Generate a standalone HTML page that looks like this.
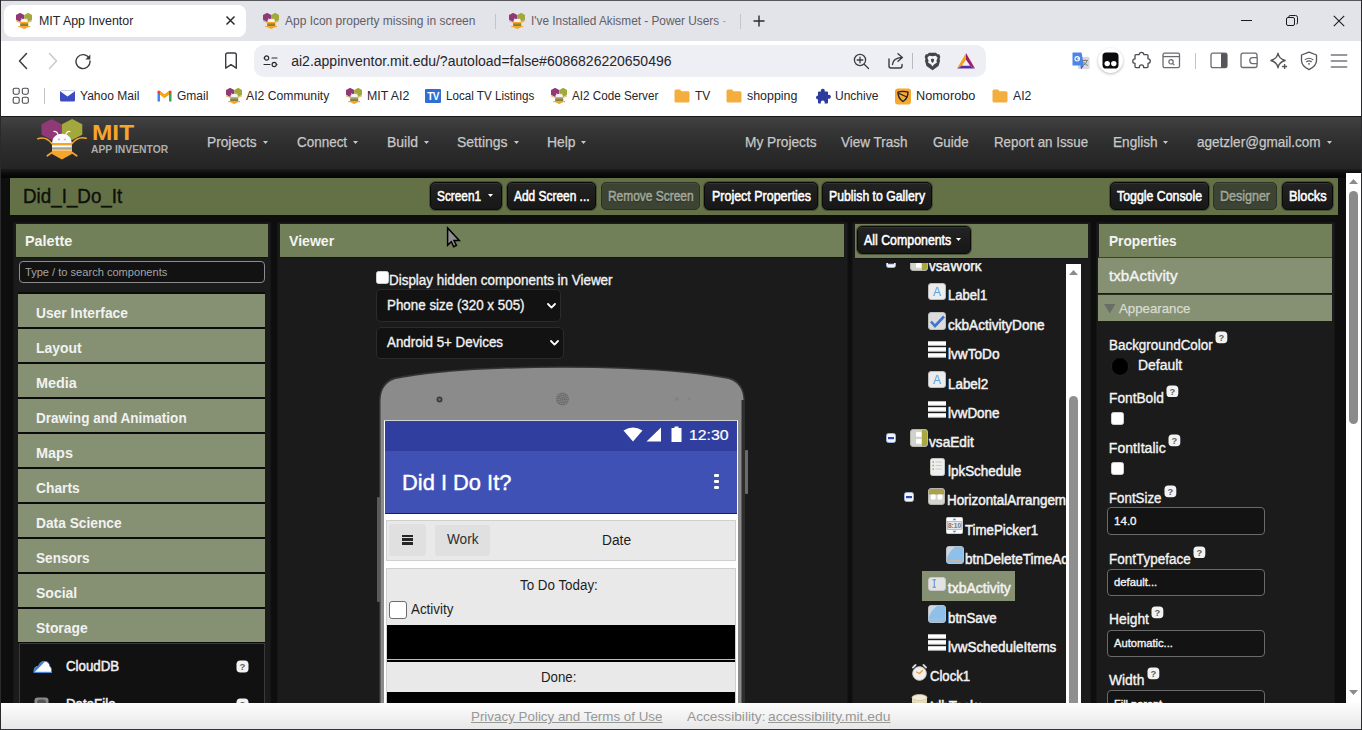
<!DOCTYPE html>
<html lang="en"><head><meta charset="utf-8"><title>MIT App Inventor</title>
<style>
html,body{margin:0;padding:0;}
body{width:1362px;height:730px;overflow:hidden;position:relative;background:#111;font-family:"Liberation Sans", sans-serif;}
div,svg,span.t{position:absolute;}
div{box-sizing:border-box;}
span.t{white-space:nowrap;}

</style></head><body>
<div style="left:0px;top:116px;width:1362px;height:614px;background:#0e0e0e;"></div>
<div style="left:0px;top:116px;width:1362px;height:53px;background:linear-gradient(#424242 0%, #363636 25%, #2d2d2d 55%, #242424 100%);border-top:1px solid #1a1a1a;"></div>
<div style="left:0px;top:169px;width:1362px;height:9px;background:linear-gradient(#1d1d1d, #0d0d0d 45%, #030303);"></div>
<svg style="left:36.5px;top:117.5px" width="50" height="42.0" viewBox="0 0 50 42"><polygon points="14.70,0.90 24.90,6.20 24.90,16.80 14.70,22.10 4.50,16.80 4.50,6.20" fill="#8f3a77"/><polygon points="35.10,0.90 45.30,6.20 45.30,16.80 35.10,22.10 24.90,16.80 24.90,6.20" fill="#a2a83b"/><path d="M0.800 20.800 Q9 17.800 15 25.800 M49.200 20.300 Q41 17.800 34.800 25.800" stroke="#f5a52a" stroke-width="1.500" fill="none" stroke-linecap="round"/><path d="M16 33.800 L10.300 37.800 M33.800 33.800 L39.700 37.800" stroke="#f5a52a" stroke-width="1.700" stroke-linecap="round" fill="none"/><polygon points="15,32 34.800,32 34.800,36 24.900,41.400 15,36" fill="#f5a52a"/><path d="M15 26 C15 19.500 19 15.800 24.900 15.800 C30.800 15.800 34.800 19.500 34.800 26 L34.800 33 L15 33 Z" fill="#fafafa"/><rect x="15" y="25" width="19.800" height="2.300" fill="#f5a52a"/><rect x="15" y="29.300" width="19.800" height="2.400" fill="#a3a394"/><rect x="15" y="32.400" width="19.800" height="1.900" fill="#f5a52a"/><path d="M21 17 C20.500 14.500 19 13.300 16.800 13.500 M28.800 17 C29.300 14.500 30.800 13.300 33 13.500" stroke="#fafafa" stroke-width="1.200" fill="none" stroke-linecap="round"/><path d="M21 20.800 L23 22.200 M23 20.800 L21 22.200 M26.800 20.800 L28.800 22.200 M28.800 20.800 L26.800 22.200" stroke="#9a9a9a" stroke-width="0.600"/></svg>
<span class="t" style="top:119.00px;font-size:22.3px;line-height:28px;color:#f5a52a;font-weight:700;left:91.57px;transform-origin:0 50%;transform:scaleX(1.0954);">MIT</span>
<span class="t" style="top:143.00px;font-size:10.5px;line-height:13px;color:#adadad;font-weight:700;left:91.42px;transform-origin:0 50%;transform:scaleX(0.9842);">APP INVENTOR</span>
<span class="t" style="top:133.00px;font-size:14.5px;line-height:18px;color:#c8c8c8;left:207.2px;transform-origin:0 50%;transform:scaleX(0.9466);-webkit-text-stroke:0.25px currentColor;">Projects</span>
<svg style="left:263px;top:141px;" width="5" height="3" viewBox="0 0 5 3"><polygon points="0,0 5,0 2.5,3" fill="#c8c8c8"/></svg>
<span class="t" style="top:133.00px;font-size:14.5px;line-height:18px;color:#c8c8c8;left:296.7px;transform-origin:0 50%;transform:scaleX(0.9274);-webkit-text-stroke:0.25px currentColor;">Connect</span>
<svg style="left:353px;top:141px;" width="5" height="3" viewBox="0 0 5 3"><polygon points="0,0 5,0 2.5,3" fill="#c8c8c8"/></svg>
<span class="t" style="top:133.00px;font-size:14.5px;line-height:18px;color:#c8c8c8;left:386.7px;transform-origin:0 50%;transform:scaleX(0.9642);-webkit-text-stroke:0.25px currentColor;">Build</span>
<svg style="left:424px;top:141px;" width="5" height="3" viewBox="0 0 5 3"><polygon points="0,0 5,0 2.5,3" fill="#c8c8c8"/></svg>
<span class="t" style="top:133.00px;font-size:14.5px;line-height:18px;color:#c8c8c8;left:457.2px;transform-origin:0 50%;transform:scaleX(0.9654);-webkit-text-stroke:0.25px currentColor;">Settings</span>
<svg style="left:514px;top:141px;" width="5" height="3" viewBox="0 0 5 3"><polygon points="0,0 5,0 2.5,3" fill="#c8c8c8"/></svg>
<span class="t" style="top:133.00px;font-size:14.5px;line-height:18px;color:#c8c8c8;left:546.7px;transform-origin:0 50%;transform:scaleX(0.9587);-webkit-text-stroke:0.25px currentColor;">Help</span>
<svg style="left:581px;top:141px;" width="5" height="3" viewBox="0 0 5 3"><polygon points="0,0 5,0 2.5,3" fill="#c8c8c8"/></svg>
<span class="t" style="top:133.00px;font-size:14.5px;line-height:18px;color:#c8c8c8;left:744.7px;transform-origin:0 50%;transform:scaleX(0.9451);-webkit-text-stroke:0.25px currentColor;">My Projects</span>
<span class="t" style="top:133.00px;font-size:14.5px;line-height:18px;color:#c8c8c8;left:841.2px;transform-origin:0 50%;transform:scaleX(0.9318);-webkit-text-stroke:0.25px currentColor;">View Trash</span>
<span class="t" style="top:133.00px;font-size:14.5px;line-height:18px;color:#c8c8c8;left:933.2px;transform-origin:0 50%;transform:scaleX(0.9197);-webkit-text-stroke:0.25px currentColor;">Guide</span>
<span class="t" style="top:133.00px;font-size:14.5px;line-height:18px;color:#c8c8c8;left:994.2px;transform-origin:0 50%;transform:scaleX(0.9191);-webkit-text-stroke:0.25px currentColor;">Report an Issue</span>
<span class="t" style="top:133.00px;font-size:14.5px;line-height:18px;color:#c8c8c8;left:1112.9px;transform-origin:0 50%;transform:scaleX(0.9376);-webkit-text-stroke:0.25px currentColor;">English</span>
<svg style="left:1163px;top:141px;" width="5" height="3" viewBox="0 0 5 3"><polygon points="0,0 5,0 2.5,3" fill="#c8c8c8"/></svg>
<span class="t" style="top:133.00px;font-size:14.5px;line-height:18px;color:#c8c8c8;left:1196.9px;transform-origin:0 50%;transform:scaleX(0.9336);-webkit-text-stroke:0.25px currentColor;">agetzler@gmail.com</span>
<svg style="left:1326.5px;top:141px;" width="5" height="3" viewBox="0 0 5 3"><polygon points="0,0 5,0 2.5,3" fill="#c8c8c8"/></svg>
<div style="left:10px;top:178px;width:1328px;height:37px;background:#647147;"></div>
<span class="t" style="top:183.00px;font-size:20.5px;line-height:26px;color:#0e100a;left:23.17px;transform-origin:0 50%;transform:scaleX(0.9168);-webkit-text-stroke:0.4px currentColor;">Did_I_Do_It</span>
<div style="left:430px;top:182px;width:72px;height:28px;background:linear-gradient(#232323,#171717);border:1px solid #0a0a0a;border-radius:5px;box-shadow:inset 0 1px 0 rgba(255,255,255,0.08), 0 0 0 1px rgba(40,48,28,0.5);"></div>
<span class="t" style="top:187.00px;font-size:14px;line-height:18px;color:#ffffff;left:436.73px;transform-origin:0 50%;transform:scaleX(0.8444);-webkit-text-stroke:0.55px currentColor;text-shadow:0 1px 1px rgba(0,0,0,0.6);">Screen1</span>
<svg style="left:488px;top:194px;" width="5" height="3" viewBox="0 0 5 3"><polygon points="0,0 5,0 2.5,3" fill="#ffffff"/></svg>
<div style="left:507px;top:182px;width:89px;height:28px;background:linear-gradient(#232323,#171717);border:1px solid #0a0a0a;border-radius:5px;box-shadow:inset 0 1px 0 rgba(255,255,255,0.08), 0 0 0 1px rgba(40,48,28,0.5);"></div>
<span class="t" style="top:187.00px;font-size:14px;line-height:18px;color:#ffffff;left:513.73px;transform-origin:0 50%;transform:scaleX(0.8515);-webkit-text-stroke:0.55px currentColor;text-shadow:0 1px 1px rgba(0,0,0,0.6);">Add Screen ...</span>
<div style="left:601px;top:182px;width:99px;height:28px;background:#3d4434;border:1px solid #2c3225;border-radius:5px;box-shadow:inset 0 1px 0 rgba(255,255,255,0.06);"></div>
<span class="t" style="top:187.00px;font-size:14px;line-height:18px;color:#a3a79a;left:607.93px;transform-origin:0 50%;transform:scaleX(0.8521);-webkit-text-stroke:0.55px currentColor;text-shadow:0 1px 1px rgba(0,0,0,0.6);">Remove Screen</span>
<div style="left:704px;top:182px;width:113.5px;height:28px;background:linear-gradient(#232323,#171717);border:1px solid #0a0a0a;border-radius:5px;box-shadow:inset 0 1px 0 rgba(255,255,255,0.08), 0 0 0 1px rgba(40,48,28,0.5);"></div>
<span class="t" style="top:187.00px;font-size:14px;line-height:18px;color:#ffffff;left:711.73px;transform-origin:0 50%;transform:scaleX(0.8900);-webkit-text-stroke:0.55px currentColor;text-shadow:0 1px 1px rgba(0,0,0,0.6);">Project Properties</span>
<div style="left:822px;top:182px;width:110px;height:28px;background:linear-gradient(#232323,#171717);border:1px solid #0a0a0a;border-radius:5px;box-shadow:inset 0 1px 0 rgba(255,255,255,0.08), 0 0 0 1px rgba(40,48,28,0.5);"></div>
<span class="t" style="top:187.00px;font-size:14px;line-height:18px;color:#ffffff;left:828.73px;transform-origin:0 50%;transform:scaleX(0.8753);-webkit-text-stroke:0.55px currentColor;text-shadow:0 1px 1px rgba(0,0,0,0.6);">Publish to Gallery</span>
<div style="left:1110px;top:182px;width:99px;height:28px;background:linear-gradient(#232323,#171717);border:1px solid #0a0a0a;border-radius:5px;box-shadow:inset 0 1px 0 rgba(255,255,255,0.08), 0 0 0 1px rgba(40,48,28,0.5);"></div>
<span class="t" style="top:187.00px;font-size:14px;line-height:18px;color:#ffffff;left:1117.23px;transform-origin:0 50%;transform:scaleX(0.8811);-webkit-text-stroke:0.55px currentColor;text-shadow:0 1px 1px rgba(0,0,0,0.6);">Toggle Console</span>
<div style="left:1213px;top:182px;width:64px;height:28px;background:#3d4434;border:1px solid #2c3225;border-radius:5px;box-shadow:inset 0 1px 0 rgba(255,255,255,0.06);"></div>
<span class="t" style="top:187.00px;font-size:14px;line-height:18px;color:#a3a79a;left:1220.23px;transform-origin:0 50%;transform:scaleX(0.8931);-webkit-text-stroke:0.55px currentColor;text-shadow:0 1px 1px rgba(0,0,0,0.6);">Designer</span>
<div style="left:1281.5px;top:182px;width:51.5px;height:28px;background:linear-gradient(#232323,#171717);border:1px solid #0a0a0a;border-radius:5px;box-shadow:inset 0 1px 0 rgba(255,255,255,0.08), 0 0 0 1px rgba(40,48,28,0.5);"></div>
<span class="t" style="top:187.00px;font-size:14px;line-height:18px;color:#ffffff;left:1288.73px;transform-origin:0 50%;transform:scaleX(0.9104);-webkit-text-stroke:0.55px currentColor;text-shadow:0 1px 1px rgba(0,0,0,0.6);">Blocks</span>
<div style="left:1346px;top:173px;width:15px;height:530px;background:#ffffff;"></div>
<svg style="left:1349px;top:179px;" width="9" height="5" viewBox="0 0 9 5"><polygon points="4.500,0 9,5 0,5" fill="#8b8b8b"/></svg>
<div style="left:1349.2px;top:191px;width:8.8px;height:233px;background:#8b8b8b;border-radius:4.5px;"></div>
<svg style="left:1349px;top:690px;" width="9" height="5" viewBox="0 0 9 5"><polygon points="0,0 9,0 4.500,5" fill="#8b8b8b"/></svg>
<div style="left:13.5px;top:223px;width:256.6px;height:484px;background:#1b1b1b;border-radius:1px;box-shadow:0 0 1.500px 0.500px #181818;"></div>
<div style="left:16px;top:224px;width:251.6px;height:480px;background:#1b1b1b;"></div>
<div style="left:16px;top:224px;width:251.6px;height:33px;background:#728059;"></div>
<div style="left:16px;top:257px;width:251.6px;height:1px;background:#121212;"></div>
<span class="t" style="top:231.00px;font-size:15px;line-height:19px;color:#f4f4f4;font-weight:700;left:25.18px;transform-origin:0 50%;transform:scaleX(0.9603);">Palette</span>
<div style="left:18.5px;top:261.3px;width:246.3px;height:21.5px;background:#121212;border:1px solid #8c8c8c;border-radius:4px;"></div>
<span class="t" style="top:265.00px;font-size:11.6px;line-height:14px;color:#a4a4a4;left:25.36px;transform-origin:0 50%;transform:scaleX(0.9557);">Type / to search components</span>
<div style="left:18px;top:292px;width:247px;height:352px;background:#0c0c0c;"></div>
<div style="left:18px;top:294px;width:247px;height:33px;background:#869174;"></div>
<span class="t" style="top:303.00px;font-size:15.2px;line-height:19px;color:#f2f2f2;font-weight:700;left:36.16px;transform-origin:0 50%;transform:scaleX(0.9078);">User Interface</span>
<div style="left:18px;top:329px;width:247px;height:33px;background:#869174;"></div>
<span class="t" style="top:338.00px;font-size:15.2px;line-height:19px;color:#f2f2f2;font-weight:700;left:36.16px;transform-origin:0 50%;transform:scaleX(0.9152);">Layout</span>
<div style="left:18px;top:364px;width:247px;height:33px;background:#869174;"></div>
<span class="t" style="top:373.00px;font-size:15.2px;line-height:19px;color:#f2f2f2;font-weight:700;left:36.16px;transform-origin:0 50%;transform:scaleX(0.9495);">Media</span>
<div style="left:18px;top:399px;width:247px;height:33px;background:#869174;"></div>
<span class="t" style="top:408.00px;font-size:15.2px;line-height:19px;color:#f2f2f2;font-weight:700;left:36.16px;transform-origin:0 50%;transform:scaleX(0.8913);">Drawing and Animation</span>
<div style="left:18px;top:434px;width:247px;height:33px;background:#869174;"></div>
<span class="t" style="top:443.00px;font-size:15.2px;line-height:19px;color:#f2f2f2;font-weight:700;left:36.16px;transform-origin:0 50%;transform:scaleX(0.9522);">Maps</span>
<div style="left:18px;top:469px;width:247px;height:33px;background:#869174;"></div>
<span class="t" style="top:478.00px;font-size:15.2px;line-height:19px;color:#f2f2f2;font-weight:700;left:36.16px;transform-origin:0 50%;transform:scaleX(0.9078);">Charts</span>
<div style="left:18px;top:504px;width:247px;height:33px;background:#869174;"></div>
<span class="t" style="top:513.00px;font-size:15.2px;line-height:19px;color:#f2f2f2;font-weight:700;left:36.16px;transform-origin:0 50%;transform:scaleX(0.9060);">Data Science</span>
<div style="left:18px;top:539px;width:247px;height:33px;background:#869174;"></div>
<span class="t" style="top:548.00px;font-size:15.2px;line-height:19px;color:#f2f2f2;font-weight:700;left:36.16px;transform-origin:0 50%;transform:scaleX(0.8955);">Sensors</span>
<div style="left:18px;top:574px;width:247px;height:33px;background:#869174;"></div>
<span class="t" style="top:583.00px;font-size:15.2px;line-height:19px;color:#f2f2f2;font-weight:700;left:36.16px;transform-origin:0 50%;transform:scaleX(0.9223);">Social</span>
<div style="left:18px;top:609px;width:247px;height:33px;background:#869174;"></div>
<span class="t" style="top:618.00px;font-size:15.2px;line-height:19px;color:#f2f2f2;font-weight:700;left:36.16px;transform-origin:0 50%;transform:scaleX(0.9138);">Storage</span>
<div style="left:18.5px;top:643px;width:246.5px;height:62px;background:#111111;border:1px solid #3a3a3a;"></div>
<svg style="left:32.5px;top:659.5px;" width="19" height="13.6" viewBox="0 0 21 15"><path d="M1 14 L1 11 Q1.500 7 6 7 Q8 1 13.5 1.5 Q18 2 18.500 7 Q20.5 8 20.5 11 L20.5 14 Z" fill="#ffffff" stroke="#3f6fd0" stroke-width="0.800"/><path d="M1 14 L1 11 Q1.5 7 6 7 Q8 1 13.5 1.5 L6 9 Z" fill="#3f7fd6"/><path d="M1 13 H20.500 V14.5 H1 Z" fill="#4a86d8"/></svg>
<span class="t" style="top:657.00px;font-size:14px;line-height:18px;color:#f0f0f0;left:65.53px;transform-origin:0 50%;transform:scaleX(0.9502);-webkit-text-stroke:0.5px currentColor;">CloudDB</span>
<svg style="left:236px;top:660px;" width="13" height="13" viewBox="0 0 13 13"><rect x="0.5" y="0.5" width="12" height="12" rx="3.800" fill="#f2f2f2"/><text x="6.5" y="10" font-family="Liberation Sans, sans-serif" font-weight="700" font-size="9.500" fill="#5f5f5f" text-anchor="middle">?</text></svg>
<svg style="left:34px;top:697px;" width="15" height="12" viewBox="0 0 15 12"><rect x="0.5" y="0.5" width="14" height="11" rx="3" fill="#8a8a8a"/><rect x="3" y="2.5" width="9" height="8" rx="3" fill="#555"/></svg>
<span class="t" style="top:695.00px;font-size:14px;line-height:18px;color:#f0f0f0;left:65.53px;transform-origin:0 50%;transform:scaleX(0.9501);-webkit-text-stroke:0.5px currentColor;">DataFile</span>
<svg style="left:236px;top:697.5px;" width="13" height="13" viewBox="0 0 13 13"><rect x="0.5" y="0.5" width="12" height="12" rx="3.800" fill="#f2f2f2"/><text x="6.5" y="10" font-family="Liberation Sans, sans-serif" font-weight="700" font-size="9.500" fill="#5f5f5f" text-anchor="middle">?</text></svg>
<div style="left:277.5px;top:223px;width:569px;height:484px;background:#1b1b1b;border-radius:1px;box-shadow:0 0 1.500px 0.500px #181818;"></div>
<div style="left:280px;top:224px;width:564px;height:480px;background:#1b1b1b;"></div>
<div style="left:280px;top:224px;width:564px;height:33px;background:#728059;"></div>
<div style="left:280px;top:257px;width:564px;height:1px;background:#121212;"></div>
<span class="t" style="top:231.00px;font-size:15px;line-height:19px;color:#f4f4f4;font-weight:700;left:289.18px;transform-origin:0 50%;transform:scaleX(0.9388);">Viewer</span>
<div style="left:376px;top:271px;width:12.8px;height:13.2px;background:#ffffff;border-radius:2.5px;border:1px solid #cfcfcf;"></div>
<span class="t" style="top:271.00px;font-size:14px;line-height:18px;color:#f2f2f2;left:389.23px;transform-origin:0 50%;transform:scaleX(0.9585);-webkit-text-stroke:0.35px currentColor;">Display hidden components in Viewer</span>
<div style="left:376px;top:289px;width:185px;height:32.5px;background:#121212;border:1px solid #2b2b2b;border-radius:5px;"></div>
<span class="t" style="top:296.00px;font-size:14px;line-height:18px;color:#f2f2f2;left:386.73px;transform-origin:0 50%;transform:scaleX(0.9552);-webkit-text-stroke:0.35px currentColor;">Phone size (320 x 505)</span>
<svg style="left:546.5px;top:302.5px;" width="9" height="6" viewBox="0 0 9 6"><path d="M1 1 L4.5 4.6 L8 1" stroke="#ffffff" stroke-width="1.8" fill="none" stroke-linecap="round" stroke-linejoin="round"/></svg>
<div style="left:376px;top:326.5px;width:188px;height:32px;background:#121212;border:1px solid #2b2b2b;border-radius:5px;"></div>
<span class="t" style="top:333.00px;font-size:14px;line-height:18px;color:#f2f2f2;left:386.73px;transform-origin:0 50%;transform:scaleX(0.9527);-webkit-text-stroke:0.35px currentColor;">Android 5+ Devices</span>
<svg style="left:549.5px;top:339.5px;" width="9" height="6" viewBox="0 0 9 6"><path d="M1 1 L4.5 4.6 L8 1" stroke="#ffffff" stroke-width="1.8" fill="none" stroke-linecap="round" stroke-linejoin="round"/></svg>
<svg style="left:379px;top:366px;" width="366" height="340" viewBox="0 0 366 340"><path d="M0 340 V34 C0.5 22 6 14.5 15 11.5 Q35 7.5 60 5.2 Q115 0.3 183 0.3 Q251 0.3 306 5.2 Q331 7.5 351 11.5 C360 14.5 365.5 22 366 34 V340 Z" fill="#333333"/><path d="M1.5 340 V34 C2.0 22 7.5 16.0 16.5 13.0 Q36.5 9.0 61.5 6.7 Q115 1.8 183 1.8 Q251 1.8 304.5 6.7 Q329.5 9.0 349.5 13.0 C358.5 16.0 364.0 22 364.5 34 V340 Z" fill="#8b8b8b"/><path d="M362.500 34 V340 H366 V34 Z" fill="#2e2e2e"/><circle cx="60.500" cy="33.5" r="3" fill="#3c3c3c"/><circle cx="60.5" cy="33.5" r="1.2" fill="#6d7a3a"/><circle cx="183.500" cy="33" r="6.800" fill="#828282"/><circle cx="183.5" cy="33" r="5.600" fill="none" stroke="#5e5e5e" stroke-width="1.100" stroke-dasharray="1 0.900"/><circle cx="183.5" cy="33" r="3.700" fill="none" stroke="#5e5e5e" stroke-width="1.100" stroke-dasharray="1 0.900"/><circle cx="183.5" cy="33" r="1.800" fill="none" stroke="#5e5e5e" stroke-width="1.100" stroke-dasharray="1 0.900"/><circle cx="183.5" cy="33" r="0.600" fill="#5e5e5e"/><circle cx="298" cy="33" r="1.8" fill="#808080"/><circle cx="310.500" cy="33" r="1.2" fill="#828282"/></svg>
<div style="left:745px;top:450px;width:2.5px;height:44px;background:#6a6a6a;border-radius:1px;"></div>
<div style="left:377px;top:497px;width:2.5px;height:105px;background:#5a5a5a;border-radius:1px;"></div>
<div style="left:384px;top:419.5px;width:354px;height:284px;background:#ffffff;border-top:1px solid #d4d4d4;"></div>
<div style="left:385px;top:420.5px;width:352px;height:30px;background:#303f9f;"></div>
<div style="left:385px;top:450.5px;width:352px;height:62.5px;background:#3f51b5;"></div>
<div style="left:385px;top:513px;width:352px;height:1px;background:#1e2248;"></div>
<svg style="left:623px;top:427px;" width="20" height="15" viewBox="0 0 20 15"><path d="M10 14.5 L0.5 3.5 Q10 -2.500 19.5 3.5 Z" fill="#ffffff"/></svg>
<svg style="left:646px;top:427px;" width="16" height="15" viewBox="0 0 16 15"><path d="M15 0.5 V14.5 H0.5 Z" fill="#ffffff"/></svg>
<svg style="left:670.5px;top:425.5px;" width="11" height="16.5" viewBox="0 0 11 16.5"><path d="M3.500 0.5 H7.5 V2 H10.500 V16 H0.5 V2 H3.5 Z" fill="#ffffff"/></svg>
<span class="t" style="top:426.00px;font-size:14.5px;line-height:18px;color:#ffffff;left:689.2px;transform-origin:0 50%;transform:scaleX(1.0909);-webkit-text-stroke:0.2px currentColor;">12:30</span>
<span class="t" style="top:469.00px;font-size:22px;line-height:28px;color:#ffffff;left:401.79px;transform-origin:0 50%;transform:scaleX(0.9943);-webkit-text-stroke:0.4px currentColor;">Did I Do It?</span>
<div style="left:714px;top:474.2px;width:4.8px;height:3.3px;background:#ffffff;border-radius:1px;"></div>
<div style="left:714px;top:480.09999999999997px;width:4.8px;height:3.3px;background:#ffffff;border-radius:1px;"></div>
<div style="left:714px;top:486.0px;width:4.8px;height:3.3px;background:#ffffff;border-radius:1px;"></div>
<div style="left:386px;top:519.5px;width:350px;height:41.5px;background:#e9e9e9;border:1px solid #cfcfcf;"></div>
<div style="left:388.7px;top:524px;width:37px;height:32px;background:#e0e0e0;border-radius:3px;"></div>
<div style="left:401.7px;top:534.5px;width:11.3px;height:2.3px;background:#262626;"></div>
<div style="left:401.7px;top:538.4px;width:11.3px;height:2.3px;background:#262626;"></div>
<div style="left:401.7px;top:542.3px;width:11.3px;height:2.3px;background:#262626;"></div>
<div style="left:435px;top:525px;width:55px;height:30.7px;background:#e0e0e0;border-radius:3px;"></div>
<span class="t" style="top:530.00px;font-size:14px;line-height:18px;color:#2e2e2e;left:447.23px;transform-origin:0 50%;transform:scaleX(0.9728);">Work</span>
<span class="t" style="top:531.00px;font-size:14px;line-height:18px;color:#1d1d1d;left:602.23px;transform-origin:0 50%;transform:scaleX(0.9818);">Date</span>
<div style="left:386px;top:568px;width:350px;height:140px;background:#e9e9e9;border:1px solid #cfcfcf;"></div>
<span class="t" style="top:575.50px;font-size:14px;line-height:18px;color:#1d1d1d;left:519.93px;transform-origin:0 50%;transform:scaleX(0.9555);">To Do Today:</span>
<div style="left:389px;top:601px;width:17.5px;height:17.5px;background:#ffffff;border:1px solid #6c6c6c;border-radius:3px;"></div>
<span class="t" style="top:600.00px;font-size:14px;line-height:18px;color:#1d1d1d;left:410.93px;transform-origin:0 50%;transform:scaleX(0.9548);">Activity</span>
<div style="left:387px;top:625px;width:348px;height:34px;background:#000000;"></div>
<div style="left:387px;top:659px;width:348px;height:1px;background:#bdbdbd;"></div>
<div style="left:387px;top:660px;width:348px;height:2px;background:#000000;"></div>
<span class="t" style="top:668.00px;font-size:14px;line-height:18px;color:#1d1d1d;left:540.93px;transform-origin:0 50%;transform:scaleX(0.9459);">Done:</span>
<div style="left:387px;top:692px;width:348px;height:14px;background:#000000;"></div>
<svg style="left:445px;top:225px;" width="18" height="25" viewBox="0 0 18 25"><path d="M2.600 3 V20.200 L6.300 16.700 L8.700 21.800 L11.400 20.500 L9 15.500 H14.300 Z" fill="#8f8f92" stroke="#000000" stroke-width="1.500" stroke-linejoin="miter"/></svg>
<div style="left:852.5px;top:223px;width:237.5px;height:484px;background:#1b1b1b;border-radius:1px;box-shadow:0 0 1.500px 0.500px #181818;"></div>
<div style="left:855px;top:224px;width:232.5px;height:480px;background:#1b1b1b;"></div>
<div style="left:855px;top:224px;width:232.5px;height:33.5px;background:#728059;"></div>
<div style="left:855px;top:257.5px;width:232.5px;height:1px;background:#121212;"></div>
<div style="left:857.3px;top:226.4px;width:113.5px;height:27.2px;background:linear-gradient(#232323,#171717);border:1px solid #0a0a0a;border-radius:5px;box-shadow:inset 0 1px 0 rgba(255,255,255,0.08), 0 0 0 1px rgba(40,48,28,0.5);"></div>
<span class="t" style="top:231.00px;font-size:14px;line-height:18px;color:#ffffff;left:863.53px;transform-origin:0 50%;transform:scaleX(0.8827);-webkit-text-stroke:0.55px currentColor;text-shadow:0 1px 1px rgba(0,0,0,0.6);">All Components</span>
<svg style="left:956px;top:238px;" width="5" height="3" viewBox="0 0 5 3"><polygon points="0,0 5,0 2.5,3" fill="#ffffff"/></svg>
<div style="left:855px;top:263px;width:211px;height:441px;overflow:hidden;">
<svg style="left:31.200000000000045px;top:-5px;" width="10" height="10" viewBox="0 0 10 10"><rect x="0.5" y="0.5" width="9" height="9" rx="2" fill="#f4f6fb" stroke="#9fb0d8"/><rect x="2" y="4" width="6" height="2.200" fill="#2e49b0"/></svg>
<svg style="left:55.200000000000045px;top:-10px;" width="18" height="18" viewBox="0 0 18 18"><rect x="0.5" y="0.5" width="17" height="17" rx="2.5" fill="#d2d2cc" stroke="#b5b5ad"/><path d="M12 1 H15 Q17 1 17 3 V15 Q17 17 15 17 H12 Z" fill="#a9a83d"/><rect x="6" y="3" width="5.500" height="4.800" rx="1" fill="#ffffff"/><rect x="6" y="10" width="5.5" height="4.800" rx="1" fill="#ffffff"/></svg>
<span class="t" style="top:-6.00px;font-size:14px;line-height:18px;color:#f2f2f2;left:74.03px;transform-origin:0 50%;transform:scaleX(0.9693);-webkit-text-stroke:0.5px currentColor;">vsaWork</span>
<svg style="left:73px;top:20px;" width="18" height="17" viewBox="0 0 18 17"><rect x="0.5" y="0.5" width="17" height="16" rx="2.5" fill="#ececec" stroke="#bdbdbd"/><text x="9" y="13" font-family="Liberation Sans, sans-serif" font-size="12" fill="#5b9ee6" text-anchor="middle">A</text></svg>
<span class="t" style="top:23.00px;font-size:14px;line-height:18px;color:#f2f2f2;left:92.83px;transform-origin:0 50%;transform:scaleX(0.9309);-webkit-text-stroke:0.5px currentColor;">Label1</span>
<svg style="left:73px;top:49px;" width="18" height="18" viewBox="0 0 18 18"><rect x="0.5" y="0.5" width="17" height="17" rx="2.5" fill="#dcdcdc" stroke="#bdbdbd"/><path d="M3 9.5 L7 14 L16 4.5" stroke="#3f74d1" stroke-width="2.6" fill="none"/></svg>
<span class="t" style="top:53.00px;font-size:14px;line-height:18px;color:#f2f2f2;left:92.83px;transform-origin:0 50%;transform:scaleX(0.9693);-webkit-text-stroke:0.5px currentColor;">ckbActivityDone</span>
<svg style="left:73px;top:78.39999999999998px;" width="18" height="17" viewBox="0 0 18 17"><rect x="0" y="0.3" width="18" height="4.200" fill="#ffffff"/><rect x="0" y="6.2" width="18" height="4.2" fill="#ffffff"/><rect x="0" y="12.200" width="18" height="4.2" fill="#ffffff"/><rect x="0" y="3.800" width="18" height="0.8" fill="#cfcfcf"/><rect x="0" y="9.700" width="18" height="0.8" fill="#cfcfcf"/><rect x="0" y="15.700" width="18" height="0.8" fill="#cfcfcf"/></svg>
<span class="t" style="top:82.00px;font-size:14px;line-height:18px;color:#f2f2f2;left:92.83px;transform-origin:0 50%;transform:scaleX(0.9742);-webkit-text-stroke:0.5px currentColor;">lvwToDo</span>
<svg style="left:73px;top:108px;" width="18" height="17" viewBox="0 0 18 17"><rect x="0.5" y="0.5" width="17" height="16" rx="2.5" fill="#ececec" stroke="#bdbdbd"/><text x="9" y="13" font-family="Liberation Sans, sans-serif" font-size="12" fill="#5b9ee6" text-anchor="middle">A</text></svg>
<span class="t" style="top:112.00px;font-size:14px;line-height:18px;color:#f2f2f2;left:92.83px;transform-origin:0 50%;transform:scaleX(0.9570);-webkit-text-stroke:0.5px currentColor;">Label2</span>
<svg style="left:73px;top:137.60000000000002px;" width="18" height="17" viewBox="0 0 18 17"><rect x="0" y="0.3" width="18" height="4.200" fill="#ffffff"/><rect x="0" y="6.2" width="18" height="4.2" fill="#ffffff"/><rect x="0" y="12.200" width="18" height="4.2" fill="#ffffff"/><rect x="0" y="3.800" width="18" height="0.8" fill="#cfcfcf"/><rect x="0" y="9.700" width="18" height="0.8" fill="#cfcfcf"/><rect x="0" y="15.700" width="18" height="0.8" fill="#cfcfcf"/></svg>
<span class="t" style="top:141.00px;font-size:14px;line-height:18px;color:#f2f2f2;left:92.83px;transform-origin:0 50%;transform:scaleX(0.9597);-webkit-text-stroke:0.5px currentColor;">lvwDone</span>
<svg style="left:31.200000000000045px;top:170px;" width="10" height="10" viewBox="0 0 10 10"><rect x="0.5" y="0.5" width="9" height="9" rx="2" fill="#f4f6fb" stroke="#9fb0d8"/><rect x="2" y="4" width="6" height="2.200" fill="#2e49b0"/></svg>
<svg style="left:55.200000000000045px;top:166px;" width="18" height="18" viewBox="0 0 18 18"><rect x="0.5" y="0.5" width="17" height="17" rx="2.5" fill="#d2d2cc" stroke="#b5b5ad"/><path d="M12 1 H15 Q17 1 17 3 V15 Q17 17 15 17 H12 Z" fill="#a9a83d"/><rect x="6" y="3" width="5.500" height="4.800" rx="1" fill="#ffffff"/><rect x="6" y="10" width="5.5" height="4.800" rx="1" fill="#ffffff"/></svg>
<span class="t" style="top:170.00px;font-size:14px;line-height:18px;color:#f2f2f2;left:74.03px;transform-origin:0 50%;transform:scaleX(0.9743);-webkit-text-stroke:0.5px currentColor;">vsaEdit</span>
<svg style="left:75.20000000000005px;top:194.8px;" width="15" height="18" viewBox="0 0 15 18"><rect x="0.5" y="0.5" width="14" height="17" rx="2" fill="#eeeeee" stroke="#c4c4c4"/><path d="M5.500 4 H12 M5.5 7.500 H12 M5.5 11 H12" stroke="#c9c9c9" stroke-width="1.2"/><path d="M2.500 4 H4 M2.5 7.5 H4 M2.5 11 H4" stroke="#b9a13a" stroke-width="1.400"/></svg>
<span class="t" style="top:199.00px;font-size:14px;line-height:18px;color:#f2f2f2;left:92.83px;transform-origin:0 50%;transform:scaleX(0.9588);-webkit-text-stroke:0.5px currentColor;">lpkSchedule</span>
<svg style="left:48.60000000000002px;top:228.60000000000002px;" width="10" height="10" viewBox="0 0 10 10"><rect x="0.5" y="0.5" width="9" height="9" rx="2" fill="#f4f6fb" stroke="#9fb0d8"/><rect x="2" y="4" width="6" height="2.200" fill="#2e49b0"/></svg>
<svg style="left:73px;top:225px;" width="17" height="17" viewBox="0 0 17 17"><rect x="0.5" y="0.5" width="16" height="16" rx="2.5" fill="#d4d4ce" stroke="#b5b5ad"/><path d="M1 6.500 V3 Q1 1 3 1 H14 Q16 1 16 3 V6.5 Z" fill="#a9a24a"/><rect x="2.800" y="6.500" width="4.800" height="5" rx="1" fill="#ffffff"/><rect x="9.500" y="6.5" width="4.8" height="5" rx="1" fill="#ffffff"/></svg>
<span class="t" style="top:228.00px;font-size:14px;line-height:18px;color:#f2f2f2;left:92.43px;transform-origin:0 50%;transform:scaleX(0.9558);-webkit-text-stroke:0.5px currentColor;">HorizontalArrangement1</span>
<svg style="left:91px;top:254px;" width="17" height="17" viewBox="0 0 17 17"><rect x="0.5" y="0.5" width="16" height="16" rx="1" fill="#ffffff" stroke="#cfcfcf"/><rect x="1.500" y="4.500" width="14" height="8" fill="#e6e6e6" stroke="#9a9a9a" stroke-width="0.6"/><text x="8.5" y="11.300" font-family="Liberation Sans, sans-serif" font-size="6.500" font-weight="700" fill="#777" text-anchor="middle">8:10</text><path d="M6.500 3.300 L8.5 1.200 L10.500 3.300 Z M6.5 13.700 L8.5 15.800 L10.5 13.700 Z" fill="#4a86d8"/></svg>
<span class="t" style="top:258.00px;font-size:14px;line-height:18px;color:#f2f2f2;left:110.23px;transform-origin:0 50%;transform:scaleX(0.9464);-webkit-text-stroke:0.5px currentColor;">TimePicker1</span>
<svg style="left:91px;top:283px;" width="18" height="18" viewBox="0 0 18 18"><rect x="0.5" y="0.5" width="17" height="17" rx="2.500" fill="#8fc0ea" stroke="#b9c3cc"/><path d="M1 1 H9 Q3.500 5 1 12 Z" fill="#d9d9d9" opacity="0.9"/><path d="M3 14.500 H15" stroke="#c9b8a8" stroke-width="1.200"/></svg>
<span class="t" style="top:287.00px;font-size:14px;line-height:18px;color:#f2f2f2;left:110.23px;transform-origin:0 50%;transform:scaleX(0.9643);-webkit-text-stroke:0.5px currentColor;">btnDeleteTimeActivity</span>
<div style="left:66.89999999999998px;top:308px;width:93.2px;height:30px;background:#869174;"></div>
<svg style="left:73px;top:314.29999999999995px;" width="18" height="14" viewBox="0 0 18 14"><rect x="0.5" y="0.5" width="17" height="13" rx="2.5" fill="#e2e2e2" stroke="#c9c9c9"/><path d="M4.500 2.800 H8 M4.5 10.200 H8 M6.250 2.800 V10.200" stroke="#5b8fd6" stroke-width="1" fill="none"/></svg>
<span class="t" style="top:316.00px;font-size:14px;line-height:18px;color:#f2f2f2;left:92.83px;-webkit-text-stroke:0.5px currentColor;">txbActivity</span>
<svg style="left:73px;top:342px;" width="18" height="18" viewBox="0 0 18 18"><rect x="0.5" y="0.5" width="17" height="17" rx="2.500" fill="#8fc0ea" stroke="#b9c3cc"/><path d="M1 1 H9 Q3.500 5 1 12 Z" fill="#d9d9d9" opacity="0.9"/><path d="M3 14.500 H15" stroke="#c9b8a8" stroke-width="1.200"/></svg>
<span class="t" style="top:346.00px;font-size:14px;line-height:18px;color:#f2f2f2;left:92.83px;transform-origin:0 50%;transform:scaleX(0.9487);-webkit-text-stroke:0.5px currentColor;">btnSave</span>
<svg style="left:73px;top:371.4px;" width="18" height="17" viewBox="0 0 18 17"><rect x="0" y="0.3" width="18" height="4.200" fill="#ffffff"/><rect x="0" y="6.2" width="18" height="4.2" fill="#ffffff"/><rect x="0" y="12.200" width="18" height="4.2" fill="#ffffff"/><rect x="0" y="3.800" width="18" height="0.8" fill="#cfcfcf"/><rect x="0" y="9.700" width="18" height="0.8" fill="#cfcfcf"/><rect x="0" y="15.700" width="18" height="0.8" fill="#cfcfcf"/></svg>
<span class="t" style="top:375.00px;font-size:14px;line-height:18px;color:#f2f2f2;left:92.83px;transform-origin:0 50%;transform:scaleX(0.9602);-webkit-text-stroke:0.5px currentColor;">lvwScheduleItems</span>
<svg style="left:55.5px;top:401px;" width="17" height="17" viewBox="0 0 17 17"><path d="M2 3.500 L4.500 1 M15 3.500 L12.500 1" stroke="#d8d8d8" stroke-width="1.800" stroke-linecap="round"/><circle cx="8.500" cy="9.500" r="6.800" fill="#f2f0ea" stroke="#d0d0d0" stroke-width="1"/><path d="M8.500 9.500 L11.500 6.500 M8.5 9.500 L5.500 8" stroke="#e29a3a" stroke-width="1.200" stroke-linecap="round"/></svg>
<span class="t" style="top:404.00px;font-size:14px;line-height:18px;color:#f2f2f2;left:74.73px;transform-origin:0 50%;transform:scaleX(0.9356);-webkit-text-stroke:0.5px currentColor;">Clock1</span>
<svg style="left:55.5px;top:430.5px;" width="17" height="18" viewBox="0 0 17 18"><path d="M1 3.500 V15 Q1 17.500 8.500 17.500 Q16 17.500 16 15 V3.5 Z" fill="#e6dcc0"/><ellipse cx="8.5" cy="3.500" rx="7.500" ry="3" fill="#f3ecd6" stroke="#cfc5a5" stroke-width="0.800"/><path d="M1 8 Q8.500 11.500 16 8" stroke="#cfc5a5" stroke-width="0.8" fill="none"/></svg>
<span class="t" style="top:434.00px;font-size:14px;line-height:18px;color:#f2f2f2;left:74.73px;transform-origin:0 50%;transform:scaleX(0.9690);-webkit-text-stroke:0.5px currentColor;">tdbTasks</span>
</div>
<div style="left:1066px;top:264px;width:15px;height:440px;background:#ffffff;"></div>
<svg style="left:1069px;top:270px;" width="9" height="5" viewBox="0 0 9 5"><polygon points="4.500,0 9,5 0,5" fill="#8b8b8b"/></svg>
<div style="left:1069.3px;top:396px;width:8.5px;height:320px;background:#8f8f8f;border-radius:4.5px;"></div>
<div style="left:1096.5px;top:223px;width:237.5px;height:484px;background:#1b1b1b;border-radius:1px;box-shadow:0 0 1.500px 0.500px #181818;"></div>
<div style="left:1099px;top:224px;width:232.5px;height:480px;background:#1b1b1b;"></div>
<div style="left:1099px;top:224px;width:232.5px;height:33.3px;background:#728059;"></div>
<div style="left:1098px;top:258.3px;width:234px;height:35.2px;background:#869174;"></div>
<div style="left:1098px;top:295.3px;width:234px;height:25.6px;background:#869174;"></div>
<div style="left:1098px;top:257.3px;width:234px;height:1px;background:#3a4030;"></div>
<div style="left:1098px;top:293.5px;width:234px;height:1.8px;background:#2a2e22;"></div>
<span class="t" style="top:231.00px;font-size:15px;line-height:19px;color:#f4f4f4;font-weight:700;left:1108.58px;transform-origin:0 50%;transform:scaleX(0.9117);">Properties</span>
<span class="t" style="top:266.00px;font-size:15.5px;line-height:19px;color:#f4f4f4;left:1108.55px;transform-origin:0 50%;transform:scaleX(0.9848);-webkit-text-stroke:0.35px currentColor;">txbActivity</span>
<svg style="left:1103.6px;top:304px;" width="11.5" height="9.5" viewBox="0 0 11.5 9.5"><polygon points="0,0 11.5,0 5.750,9.5" fill="#6b6e66"/></svg>
<span class="t" style="top:300.00px;font-size:13.5px;line-height:17px;color:#d9dbd2;left:1118.86px;transform-origin:0 50%;transform:scaleX(0.9818);-webkit-text-stroke:0.25px currentColor;">Appearance</span>
<span class="t" style="top:336.00px;font-size:14px;line-height:18px;color:#f4f4f4;left:1108.83px;transform-origin:0 50%;transform:scaleX(0.9590);-webkit-text-stroke:0.35px currentColor;">BackgroundColor</span>
<svg style="left:1215.3px;top:331.4px;" width="12.8" height="12.8" viewBox="0 0 13 13"><rect x="0.5" y="0.5" width="12" height="12" rx="3.800" fill="#f2f2f2"/><text x="6.5" y="10" font-family="Liberation Sans, sans-serif" font-weight="700" font-size="9.500" fill="#5f5f5f" text-anchor="middle">?</text></svg>
<div style="left:1110.6px;top:357px;width:18.8px;height:18.8px;background:#000000;border-radius:50%;border:1px solid #222;"></div>
<span class="t" style="top:356.00px;font-size:14px;line-height:18px;color:#f4f4f4;left:1138.03px;transform-origin:0 50%;transform:scaleX(0.9973);-webkit-text-stroke:0.35px currentColor;">Default</span>
<span class="t" style="top:389.00px;font-size:14px;line-height:18px;color:#f4f4f4;left:1108.83px;transform-origin:0 50%;transform:scaleX(0.9803);-webkit-text-stroke:0.35px currentColor;">FontBold</span>
<svg style="left:1166px;top:384.5px;" width="12.8" height="12.8" viewBox="0 0 13 13"><rect x="0.5" y="0.5" width="12" height="12" rx="3.800" fill="#f2f2f2"/><text x="6.5" y="10" font-family="Liberation Sans, sans-serif" font-weight="700" font-size="9.500" fill="#5f5f5f" text-anchor="middle">?</text></svg>
<div style="left:1111.4px;top:412.2px;width:12.8px;height:12.8px;background:#ffffff;border-radius:2.5px;border:1px solid #cfcfcf;"></div>
<span class="t" style="top:439.00px;font-size:14px;line-height:18px;color:#f4f4f4;left:1108.83px;-webkit-text-stroke:0.35px currentColor;">FontItalic</span>
<svg style="left:1168.3px;top:434.3px;" width="12.8" height="12.8" viewBox="0 0 13 13"><rect x="0.5" y="0.5" width="12" height="12" rx="3.800" fill="#f2f2f2"/><text x="6.5" y="10" font-family="Liberation Sans, sans-serif" font-weight="700" font-size="9.500" fill="#5f5f5f" text-anchor="middle">?</text></svg>
<div style="left:1111.4px;top:462.2px;width:12.8px;height:12.8px;background:#ffffff;border-radius:2.5px;border:1px solid #cfcfcf;"></div>
<span class="t" style="top:489.00px;font-size:14px;line-height:18px;color:#f4f4f4;left:1108.83px;transform-origin:0 50%;transform:scaleX(0.9491);-webkit-text-stroke:0.35px currentColor;">FontSize</span>
<svg style="left:1164px;top:485px;" width="12.8" height="12.8" viewBox="0 0 13 13"><rect x="0.5" y="0.5" width="12" height="12" rx="3.800" fill="#f2f2f2"/><text x="6.5" y="10" font-family="Liberation Sans, sans-serif" font-weight="700" font-size="9.500" fill="#5f5f5f" text-anchor="middle">?</text></svg>
<div style="left:1107px;top:507.4px;width:158px;height:27.5px;background:#131313;border:1px solid #6a6a6a;border-radius:4px;"></div>
<span class="t" style="top:514.00px;font-size:11.5px;line-height:14px;color:#f4f4f4;left:1114.37px;transform-origin:0 50%;transform:scaleX(1.0078);-webkit-text-stroke:0.35px currentColor;">14.0</span>
<span class="t" style="top:550.00px;font-size:14px;line-height:18px;color:#f4f4f4;left:1108.83px;transform-origin:0 50%;transform:scaleX(0.9624);-webkit-text-stroke:0.35px currentColor;">FontTypeface</span>
<svg style="left:1193.2px;top:545.5px;" width="12.8" height="12.8" viewBox="0 0 13 13"><rect x="0.5" y="0.5" width="12" height="12" rx="3.800" fill="#f2f2f2"/><text x="6.5" y="10" font-family="Liberation Sans, sans-serif" font-weight="700" font-size="9.500" fill="#5f5f5f" text-anchor="middle">?</text></svg>
<div style="left:1107px;top:568.6px;width:158px;height:27.5px;background:#131313;border:1px solid #6a6a6a;border-radius:4px;"></div>
<span class="t" style="top:575.40px;font-size:11.5px;line-height:14px;color:#f4f4f4;left:1114.37px;transform-origin:0 50%;transform:scaleX(0.9805);-webkit-text-stroke:0.35px currentColor;">default...</span>
<span class="t" style="top:610.40px;font-size:14px;line-height:18px;color:#f4f4f4;left:1108.83px;transform-origin:0 50%;transform:scaleX(0.9869);-webkit-text-stroke:0.35px currentColor;">Height</span>
<svg style="left:1151.2px;top:606px;" width="12.8" height="12.8" viewBox="0 0 13 13"><rect x="0.5" y="0.5" width="12" height="12" rx="3.800" fill="#f2f2f2"/><text x="6.5" y="10" font-family="Liberation Sans, sans-serif" font-weight="700" font-size="9.500" fill="#5f5f5f" text-anchor="middle">?</text></svg>
<div style="left:1107px;top:629.5px;width:158px;height:27.5px;background:#131313;border:1px solid #6a6a6a;border-radius:4px;"></div>
<span class="t" style="top:636.30px;font-size:11.5px;line-height:14px;color:#f4f4f4;left:1114.37px;transform-origin:0 50%;transform:scaleX(0.9695);-webkit-text-stroke:0.35px currentColor;">Automatic...</span>
<span class="t" style="top:671.00px;font-size:14px;line-height:18px;color:#f4f4f4;left:1108.83px;transform-origin:0 50%;transform:scaleX(0.9872);-webkit-text-stroke:0.35px currentColor;">Width</span>
<svg style="left:1147px;top:667px;" width="12.8" height="12.8" viewBox="0 0 13 13"><rect x="0.5" y="0.5" width="12" height="12" rx="3.800" fill="#f2f2f2"/><text x="6.5" y="10" font-family="Liberation Sans, sans-serif" font-weight="700" font-size="9.500" fill="#5f5f5f" text-anchor="middle">?</text></svg>
<div style="left:1107px;top:689.7px;width:158px;height:27.5px;background:#131313;border:1px solid #6a6a6a;border-radius:4px;"></div>
<span class="t" style="top:697.00px;font-size:11.5px;line-height:14px;color:#f4f4f4;left:1114.37px;transform-origin:0 50%;transform:scaleX(0.9532);-webkit-text-stroke:0.35px currentColor;">Fill parent...</span>
<div style="left:0px;top:703px;width:1362px;height:27px;background:linear-gradient(#fdfdfd,#f2f2f2 50%,#e6e6e6);"></div>
<div style="left:0px;top:728.5px;width:1362px;height:0.7px;background:#d5e6f0;"></div>
<div style="left:0px;top:729px;width:1362px;height:1px;background:#34343a;"></div>
<span class="t" style="top:708.00px;font-size:13.5px;line-height:17px;color:#979797;left:471.26px;transform-origin:0 50%;transform:scaleX(0.9905);text-decoration:underline;">Privacy Policy and Terms of Use</span>
<span class="t" style="top:708.00px;font-size:13.5px;line-height:17px;color:#979797;left:687.26px;transform-origin:0 50%;transform:scaleX(1.0156);">Accessibility:</span>
<span class="t" style="top:708.00px;font-size:13.5px;line-height:17px;color:#979797;left:768.26px;transform-origin:0 50%;transform:scaleX(1.0289);text-decoration:underline;">accessibility.mit.edu</span>
<div style="left:0px;top:0px;width:1362px;height:41px;background:#e3e3ea;"></div>
<div style="left:0px;top:41px;width:1362px;height:75px;background:#ffffff;"></div>
<div style="left:4px;top:5px;width:242px;height:32px;background:#ffffff;border-radius:8px;"></div>
<svg style="left:16px;top:12.8px" width="16.4" height="16.2" viewBox="0 0 16.4 16.2"><polygon points="4.10,-0.20 8.20,2.10 8.20,6.70 4.10,9.00 0.00,6.70 0.00,2.10" fill="#8f3a77"/><polygon points="12.30,-0.20 16.40,2.10 16.40,6.70 12.30,9.00 8.20,6.70 8.20,2.10" fill="#a2a83b"/><path d="M0 7.200 L2.500 8.600 L4.100 9.400 L4.100 10 L0 8.200 Z M16.400 7.200 L13.900 8.600 L12.300 9.400 L12.300 10 L16.400 8.200 Z" fill="#f5a52a"/><ellipse cx="8.200" cy="8" rx="3.700" ry="2.300" fill="#f2f2f2"/><path d="M6.600 6.600 L5.400 5.300 M9.800 6.600 L11 5.300" stroke="#f2f2f2" stroke-width="0.700" fill="none"/><rect x="4.200" y="9" width="8" height="1.300" fill="#f5a52a"/><rect x="4.200" y="10.300" width="8" height="2.900" fill="#80803c"/><path d="M4.200 11.700 H12.200" stroke="#a88a2c" stroke-width="0.500"/><path d="M2.200 13.100 H14.200 L14 14.200 L12.600 13.900 L8.200 16.100 L3.800 13.900 L2.400 14.200 Z" fill="#f5a52a"/></svg>
<span class="t" style="top:14.00px;font-size:12.3px;line-height:15px;color:#26262b;left:39.32px;transform-origin:0 50%;transform:scaleX(1.0100);">MIT App Inventor</span>
<svg style="left:225px;top:15px;" width="11" height="11" viewBox="0 0 11 11"><path d="M1.5 1.5 L9.5 9.5 M9.5 1.5 L1.5 9.5" stroke="#2a2a2e" stroke-width="1.5" fill="none"/></svg>
<svg style="left:262.5px;top:12.8px" width="16.4" height="16.2" viewBox="0 0 16.4 16.2"><polygon points="4.10,-0.20 8.20,2.10 8.20,6.70 4.10,9.00 0.00,6.70 0.00,2.10" fill="#8f3a77"/><polygon points="12.30,-0.20 16.40,2.10 16.40,6.70 12.30,9.00 8.20,6.70 8.20,2.10" fill="#a2a83b"/><path d="M0 7.200 L2.500 8.600 L4.100 9.400 L4.100 10 L0 8.200 Z M16.400 7.200 L13.900 8.600 L12.300 9.400 L12.300 10 L16.400 8.200 Z" fill="#f5a52a"/><ellipse cx="8.200" cy="8" rx="3.700" ry="2.300" fill="#f2f2f2"/><path d="M6.600 6.600 L5.400 5.300 M9.800 6.600 L11 5.300" stroke="#f2f2f2" stroke-width="0.700" fill="none"/><rect x="4.200" y="9" width="8" height="1.300" fill="#f5a52a"/><rect x="4.200" y="10.300" width="8" height="2.900" fill="#80803c"/><path d="M4.200 11.700 H12.200" stroke="#a88a2c" stroke-width="0.500"/><path d="M2.200 13.100 H14.200 L14 14.200 L12.600 13.900 L8.200 16.100 L3.800 13.900 L2.400 14.200 Z" fill="#f5a52a"/></svg>
<span class="t" style="top:14.00px;font-size:12.3px;line-height:15px;color:#5f6068;left:285.32px;transform-origin:0 50%;transform:scaleX(0.9738);">App Icon property missing in screen</span>
<div style="left:476px;top:10px;width:14px;height:22px;background:linear-gradient(90deg, rgba(227,227,234,0), #e3e3ea 80%);"></div>
<div style="left:494.5px;top:14px;width:1px;height:15px;background:#c4c4cc;"></div>
<svg style="left:508.5px;top:12.8px" width="16.4" height="16.2" viewBox="0 0 16.4 16.2"><polygon points="4.10,-0.20 8.20,2.10 8.20,6.70 4.10,9.00 0.00,6.70 0.00,2.10" fill="#8f3a77"/><polygon points="12.30,-0.20 16.40,2.10 16.40,6.70 12.30,9.00 8.20,6.70 8.20,2.10" fill="#a2a83b"/><path d="M0 7.200 L2.500 8.600 L4.100 9.400 L4.100 10 L0 8.200 Z M16.400 7.200 L13.900 8.600 L12.300 9.400 L12.300 10 L16.400 8.200 Z" fill="#f5a52a"/><ellipse cx="8.200" cy="8" rx="3.700" ry="2.300" fill="#f2f2f2"/><path d="M6.600 6.600 L5.400 5.300 M9.800 6.600 L11 5.300" stroke="#f2f2f2" stroke-width="0.700" fill="none"/><rect x="4.200" y="9" width="8" height="1.300" fill="#f5a52a"/><rect x="4.200" y="10.300" width="8" height="2.900" fill="#80803c"/><path d="M4.200 11.700 H12.200" stroke="#a88a2c" stroke-width="0.500"/><path d="M2.200 13.100 H14.200 L14 14.200 L12.600 13.900 L8.200 16.100 L3.800 13.900 L2.400 14.200 Z" fill="#f5a52a"/></svg>
<span class="t" style="top:14.00px;font-size:12.3px;line-height:15px;color:#5f6068;left:531.32px;transform-origin:0 50%;transform:scaleX(0.9611);">I've Installed Akismet - Power Users -</span>
<div style="left:716px;top:10px;width:16px;height:22px;background:linear-gradient(90deg, rgba(227,227,234,0), #e3e3ea 90%);"></div>
<div style="left:740px;top:14px;width:1px;height:15px;background:#c4c4cc;"></div>
<svg style="left:753px;top:15px;" width="12" height="12" viewBox="0 0 12 12"><path d="M6 0.5 V11.5 M0.5 6 H11.5" stroke="#2a2a2e" stroke-width="1.4" fill="none"/></svg>
<div style="left:1241px;top:20px;width:11px;height:1px;background:#1a1a1a;"></div>
<svg style="left:1286px;top:15px;" width="12" height="12" viewBox="0 0 12 12"><rect x="0.5" y="2.5" width="8" height="8" rx="1.5" fill="none" stroke="#1a1a1a" stroke-width="1"/><path d="M2.8 2.3 V1.8 Q2.8 0.5 4.2 0.5 H9.5 Q11.5 0.5 11.5 2.5 V7.8 Q11.5 9 10.4 9.1" fill="none" stroke="#1a1a1a" stroke-width="1"/></svg>
<svg style="left:1333px;top:15px;" width="12" height="12" viewBox="0 0 12 12"><path d="M0.8 0.8 L11.2 11.2 M11.2 0.8 L0.8 11.2" stroke="#1a1a1a" stroke-width="1.1" fill="none"/></svg>
<svg style="left:18px;top:52px;" width="10" height="18" viewBox="0 0 10 18"><path d="M8.5 1.5 L1.5 9 L8.5 16.5" stroke="#3b3b40" stroke-width="1.5" fill="none" stroke-linecap="round" stroke-linejoin="round"/></svg>
<svg style="left:48px;top:52px;" width="10" height="18" viewBox="0 0 10 18"><path d="M1.5 1.5 L8.5 9 L1.5 16.5" stroke="#c9c9cf" stroke-width="1.5" fill="none" stroke-linecap="round" stroke-linejoin="round"/></svg>
<svg style="left:74px;top:52px;" width="18" height="18" viewBox="0 0 18 18"><path d="M15.2 6.3 A7 7 0 1 0 16 9" stroke="#3b3b40" stroke-width="1.4" fill="none" stroke-linecap="round"/><path d="M16.3 2.5 V7.4 H11.4 Z" fill="#3b3b40"/></svg>
<svg style="left:224px;top:52px;" width="14" height="18" viewBox="0 0 14 18"><path d="M1.7 2.8 Q1.7 1 3.5 1 H10.5 Q12.3 1 12.3 2.8 V16.2 L7 12.6 L1.7 16.2 Z" stroke="#3b3b40" stroke-width="1.4" fill="none" stroke-linejoin="round"/></svg>
<div style="left:254px;top:45px;width:732px;height:32px;background:#eeeef5;border-radius:10px;"></div>
<svg style="left:263px;top:54px;" width="15" height="14" viewBox="0 0 15 14"><path d="M1 4 H5 M9 4 H14 M1 10.5 H7 M11 10.5 H14" stroke="#2a2a2e" stroke-width="1.2" fill="none" stroke-linecap="round"/><circle cx="3.6" cy="4" r="2.1" fill="#eeeef5" stroke="#2a2a2e" stroke-width="1.2"/><circle cx="11.2" cy="10.5" r="2.1" fill="#eeeef5" stroke="#2a2a2e" stroke-width="1.2"/></svg>
<span class="t" style="top:52.00px;font-size:14px;line-height:18px;color:#26262b;left:291.23px;">ai2.appinventor.mit.edu/?autoload=false#6086826220650496</span>
<svg style="left:853px;top:53px;" width="17" height="17" viewBox="0 0 17 17"><circle cx="7" cy="7" r="5.6" stroke="#3b3b40" stroke-width="1.3" fill="none"/><path d="M11.2 11.2 L15.5 15.5 M4.2 7 H9.8 M7 4.2 V9.8" stroke="#3b3b40" stroke-width="1.3" fill="none" stroke-linecap="round"/></svg>
<svg style="left:887px;top:52px;" width="18" height="18" viewBox="0 0 18 18"><path d="M2 7 V14 Q2 16 4 16 H13 Q15 16 15 14 V12.5" stroke="#3b3b40" stroke-width="1.4" fill="none" stroke-linecap="round"/><path d="M5.5 12.5 Q6 6 15 5.5 M11 1.8 L15.4 5.5 L11 9.2" stroke="#3b3b40" stroke-width="1.4" fill="none" stroke-linecap="round" stroke-linejoin="round"/></svg>
<div style="left:912px;top:53px;width:1px;height:16px;background:#b9b9c2;"></div>
<svg style="left:924px;top:52px;" width="17" height="19" viewBox="0 0 17 19"><path d="M8.5 0.8 L12 0.8 L13.5 2.3 L15.3 2.3 L16.3 5 L15.6 7 L16 9 L14.5 14 L8.5 18.3 L2.5 14 L1 9 L1.4 7 L0.7 5 L1.7 2.3 L3.5 2.3 L5 0.8 Z" fill="#44444c"/><path d="M8.5 4.2 L11.8 3.8 L13.6 5.8 L12.4 8.8 L13 10.5 L10 12.6 L8.5 14.6 L7 12.6 L4 10.5 L4.6 8.8 L3.4 5.8 L5.2 3.8 Z" fill="#f3f3f6"/><path d="M8.5 6.5 L10.2 7.5 L9.6 9.8 L8.5 11 L7.4 9.8 L6.8 7.5 Z" fill="#44444c"/></svg>
<svg style="left:956px;top:52px;" width="20" height="18" viewBox="0 0 20 18"><polygon points="10,1 19,16.5 1,16.5" fill="#fff"/><polygon points="10,1 10,8 6.200,13.600 1,16.5" fill="#f5a21b"/><polygon points="10,1 19,16.5 13.800,13.600 10,8" fill="#9e1f63"/><polygon points="1,16.5 6.200,13.600 13.800,13.600 19,16.5" fill="#5a2d9e"/><polygon points="10,8 13.800,13.600 6.200,13.600" fill="#eeeef5"/></svg>
<svg style="left:1072px;top:52px;" width="18" height="18" viewBox="0 0 18 18"><rect x="6" y="5" width="11.5" height="12" rx="1" fill="#d6d8dc"/><path d="M0.5 1 Q0.5 0.5 1 0.5 H9.5 L12 13.5 H1 Q0.5 13.5 0.5 13 Z" fill="#4a86e8"/><path d="M12 13.5 L9 17.5 L8.5 13.5 Z" fill="#3a67c4"/><circle cx="5.2" cy="6.8" r="2.2" fill="none" stroke="#fff" stroke-width="1.1"/><path d="M5.2 6.8 H7.6" stroke="#fff" stroke-width="1.1"/><path d="M10.5 8.5 H16 M13.2 7.5 V8.5 M11.2 13.5 Q14.3 12 15 8.5 M11.7 10 Q13 12.5 15.8 13.5" stroke="#777" stroke-width="0.9" fill="none"/></svg>
<div style="left:1098px;top:48px;width:25px;height:25px;background:#ffffff;border-radius:50%;box-shadow:0 1px 3px rgba(0,0,0,0.28);"></div>
<svg style="left:1102px;top:52px;" width="17" height="17" viewBox="0 0 17 17"><rect x="0.5" y="0.5" width="16" height="16" rx="3.6" fill="#0b0b0d"/><circle cx="5.2" cy="11.6" r="2.7" fill="#fff"/><circle cx="11.8" cy="11.6" r="2.7" fill="#fff"/></svg>
<svg style="left:1132px;top:51px;" width="20" height="19" viewBox="0 0 20 19"><path d="M7.2 3.6 A2.3 2.3 0 1 1 11.8 3.6 H15 Q16 3.6 16 4.6 V7.8 A2.3 2.3 0 1 1 16 12.4 V15.6 Q16 16.6 15 16.6 H11.6 V16 A2.1 2.1 0 1 0 7.4 16 V16.6 H4 Q3 16.6 3 15.6 V12.3 H2.9 A2.2 2.2 0 1 1 3 7.9 V4.6 Q3 3.6 4 3.6 Z" stroke="#4a4a50" stroke-width="1.3" fill="none" stroke-linejoin="round"/></svg>
<svg style="left:1162px;top:52px;" width="19" height="17" viewBox="0 0 19 17"><rect x="1" y="1.2" width="16.5" height="14.5" rx="1.6" stroke="#6a6a72" stroke-width="1.3" fill="none"/><path d="M1 4.6 H17.5" stroke="#6a6a72" stroke-width="1.3"/><circle cx="9" cy="9.8" r="2.2" stroke="#6a6a72" stroke-width="1.2" fill="none"/><path d="M10.6 11.4 L12.4 13.2" stroke="#6a6a72" stroke-width="1.2"/></svg>
<div style="left:1195px;top:53px;width:1px;height:16px;background:#c4c4cc;"></div>
<svg style="left:1210px;top:52px;" width="19" height="17" viewBox="0 0 19 17"><rect x="1" y="1.2" width="16" height="14.5" rx="1.8" stroke="#6a6a72" stroke-width="1.3" fill="none"/><path d="M11 1.2 H15.2 Q17 1.2 17 3 V13.9 Q17 15.7 15.2 15.7 H11 Z" fill="#55555c"/></svg>
<svg style="left:1240px;top:52px;" width="19" height="17" viewBox="0 0 19 17"><path d="M17 5.5 V3.2 Q17 1.2 15 1.2 H3 Q1 1.2 1 3.2 V13.5 Q1 15.5 3 15.5 H15 Q17 15.5 17 13.5 V11.6" stroke="#6a6a72" stroke-width="1.3" fill="none"/><path d="M17.2 5.6 H12.5 Q9.8 5.6 9.8 8.6 Q9.8 11.6 12.5 11.6 H17.2 Z" stroke="#6a6a72" stroke-width="1.3" fill="none" stroke-linejoin="round"/></svg>
<svg style="left:1270px;top:52px;" width="19" height="18" viewBox="0 0 19 18"><path d="M8 1.2 Q9 7 15.2 8.5 Q9 10 8 15.8 Q7 10 0.8 8.5 Q7 7 8 1.2 Z" stroke="#55555c" stroke-width="1.3" fill="none" stroke-linejoin="round"/><path d="M14.6 12 V17 M12.1 14.5 H17.1" stroke="#55555c" stroke-width="1.3"/></svg>
<svg style="left:1300px;top:51px;" width="18" height="20" viewBox="0 0 18 20"><path d="M9 1.2 L16.5 4 V9.5 Q16.5 15 9 18.6 Q1.500 15 1.5 9.5 V4 Z" stroke="#55555c" stroke-width="1.3" fill="none" stroke-linejoin="round"/><path d="M5.2 8.6 Q9 5.8 12.8 8.6 M6.6 10.7 Q9 9 11.4 10.7" stroke="#55555c" stroke-width="1.1" fill="none" stroke-linecap="round"/><circle cx="9" cy="12.8" r="0.9" fill="#55555c"/></svg>
<svg style="left:1330px;top:53px;" width="18" height="16" viewBox="0 0 18 16"><path d="M0.8 2 H17.2 M0.8 8 H17.2 M0.8 14 H17.2" stroke="#77777f" stroke-width="1.3"/></svg>
<svg style="left:12px;top:87px;" width="18" height="18" viewBox="0 0 18 18"><rect x="1.2" y="1.2" width="6" height="6" rx="1.6" stroke="#4a4a50" stroke-width="1.1" fill="none"/><rect x="10.3" y="1.2" width="6" height="6" rx="1.6" stroke="#4a4a50" stroke-width="1.1" fill="none"/><rect x="1.2" y="10.3" width="6" height="6" rx="1.6" stroke="#4a4a50" stroke-width="1.1" fill="none"/><rect x="10.3" y="10.3" width="6" height="6" rx="1.6" stroke="#4a4a50" stroke-width="1.1" fill="none"/></svg>
<div style="left:44px;top:88px;width:1px;height:16px;background:#c4c4cc;"></div>
<svg style="left:60px;top:90px;" width="15" height="12" viewBox="0 0 15 12"><rect x="0" y="0.5" width="15" height="11" rx="1.5" fill="#3b4cc0"/><path d="M0.5 1.5 L7.5 6.5 L14.500 1.5 L14.5 1 Q14.5 0.5 13.500 0.5 H1.5 Q0.5 0.5 0.5 1 Z" fill="#fff"/></svg>
<span class="t" style="top:89.00px;font-size:12.3px;line-height:15px;color:#26262b;left:80.32px;transform-origin:0 50%;transform:scaleX(0.9793);">Yahoo Mail</span>
<svg style="left:157px;top:90px;" width="15" height="12" viewBox="0 0 15 12"><path d="M0.5 11.5 V2 L3 2 V11.5 Z" fill="#4285f4"/><path d="M12 11.5 V2 L14.5 2 V11.5 Z" fill="#34a853"/><path d="M0.5 2.5 L0.5 1.2 Q1.5 0 3 1 L7.5 4.6 L12 1 Q13.500 0 14.5 1.2 L14.5 2.5 L7.5 8 Z" fill="#ea4335"/><path d="M3 4.500 L3 1 L7.5 4.6 L12 1 L12 4.5 L7.5 8 Z" fill="#fbbc04" opacity="0.85"/></svg>
<span class="t" style="top:89.00px;font-size:12.3px;line-height:15px;color:#26262b;left:177.32px;transform-origin:0 50%;transform:scaleX(0.9760);">Gmail</span>
<svg style="left:226px;top:88px" width="16.4" height="16.2" viewBox="0 0 16.4 16.2"><polygon points="4.10,-0.20 8.20,2.10 8.20,6.70 4.10,9.00 0.00,6.70 0.00,2.10" fill="#8f3a77"/><polygon points="12.30,-0.20 16.40,2.10 16.40,6.70 12.30,9.00 8.20,6.70 8.20,2.10" fill="#a2a83b"/><path d="M0 7.200 L2.500 8.600 L4.100 9.400 L4.100 10 L0 8.200 Z M16.400 7.200 L13.900 8.600 L12.300 9.400 L12.300 10 L16.400 8.200 Z" fill="#f5a52a"/><ellipse cx="8.200" cy="8" rx="3.700" ry="2.300" fill="#f2f2f2"/><path d="M6.600 6.600 L5.400 5.300 M9.800 6.600 L11 5.300" stroke="#f2f2f2" stroke-width="0.700" fill="none"/><rect x="4.200" y="9" width="8" height="1.300" fill="#f5a52a"/><rect x="4.200" y="10.300" width="8" height="2.900" fill="#80803c"/><path d="M4.200 11.700 H12.200" stroke="#a88a2c" stroke-width="0.500"/><path d="M2.200 13.100 H14.200 L14 14.200 L12.600 13.900 L8.200 16.100 L3.800 13.900 L2.400 14.200 Z" fill="#f5a52a"/></svg>
<span class="t" style="top:89.00px;font-size:12.3px;line-height:15px;color:#26262b;left:246.32px;transform-origin:0 50%;transform:scaleX(0.9916);">AI2 Community</span>
<svg style="left:346px;top:88px" width="16.4" height="16.2" viewBox="0 0 16.4 16.2"><polygon points="4.10,-0.20 8.20,2.10 8.20,6.70 4.10,9.00 0.00,6.70 0.00,2.10" fill="#8f3a77"/><polygon points="12.30,-0.20 16.40,2.10 16.40,6.70 12.30,9.00 8.20,6.70 8.20,2.10" fill="#a2a83b"/><path d="M0 7.200 L2.500 8.600 L4.100 9.400 L4.100 10 L0 8.200 Z M16.400 7.200 L13.900 8.600 L12.300 9.400 L12.300 10 L16.400 8.200 Z" fill="#f5a52a"/><ellipse cx="8.200" cy="8" rx="3.700" ry="2.300" fill="#f2f2f2"/><path d="M6.600 6.600 L5.400 5.300 M9.800 6.600 L11 5.300" stroke="#f2f2f2" stroke-width="0.700" fill="none"/><rect x="4.200" y="9" width="8" height="1.300" fill="#f5a52a"/><rect x="4.200" y="10.300" width="8" height="2.900" fill="#80803c"/><path d="M4.200 11.700 H12.200" stroke="#a88a2c" stroke-width="0.500"/><path d="M2.200 13.100 H14.200 L14 14.200 L12.600 13.900 L8.200 16.100 L3.800 13.900 L2.400 14.200 Z" fill="#f5a52a"/></svg>
<span class="t" style="top:89.00px;font-size:12.3px;line-height:15px;color:#26262b;left:367.32px;transform-origin:0 50%;transform:scaleX(1.0047);">MIT AI2</span>
<svg style="left:425px;top:89px;" width="16" height="14" viewBox="0 0 16 14"><rect x="0" y="0" width="16" height="14" rx="1" fill="#2f6fd3"/><text x="8" y="11" font-family="Liberation Sans, sans-serif" font-weight="700" font-size="10" fill="#fff" text-anchor="middle" letter-spacing="-0.6">TV</text></svg>
<span class="t" style="top:89.00px;font-size:12.3px;line-height:15px;color:#26262b;left:446.32px;transform-origin:0 50%;transform:scaleX(0.9457);">Local TV Listings</span>
<svg style="left:551px;top:88px" width="16.4" height="16.2" viewBox="0 0 16.4 16.2"><polygon points="4.10,-0.20 8.20,2.10 8.20,6.70 4.10,9.00 0.00,6.70 0.00,2.10" fill="#8f3a77"/><polygon points="12.30,-0.20 16.40,2.10 16.40,6.70 12.30,9.00 8.20,6.70 8.20,2.10" fill="#a2a83b"/><path d="M0 7.200 L2.500 8.600 L4.100 9.400 L4.100 10 L0 8.200 Z M16.400 7.200 L13.900 8.600 L12.300 9.400 L12.300 10 L16.400 8.200 Z" fill="#f5a52a"/><ellipse cx="8.200" cy="8" rx="3.700" ry="2.300" fill="#f2f2f2"/><path d="M6.600 6.600 L5.400 5.300 M9.800 6.600 L11 5.300" stroke="#f2f2f2" stroke-width="0.700" fill="none"/><rect x="4.200" y="9" width="8" height="1.300" fill="#f5a52a"/><rect x="4.200" y="10.300" width="8" height="2.900" fill="#80803c"/><path d="M4.200 11.700 H12.200" stroke="#a88a2c" stroke-width="0.500"/><path d="M2.200 13.100 H14.200 L14 14.200 L12.600 13.900 L8.200 16.100 L3.800 13.900 L2.400 14.200 Z" fill="#f5a52a"/></svg>
<span class="t" style="top:89.00px;font-size:12.3px;line-height:15px;color:#26262b;left:572.32px;transform-origin:0 50%;transform:scaleX(0.9499);">AI2 Code Server</span>
<svg style="left:674px;top:89px" width="16" height="14" viewBox="0 0 16 14"><path d="M0.5 2 Q0.5 0.5 2 0.5 L6 0.5 L7.5 2.2 L14 2.2 Q15.5 2.2 15.5 3.7 L15.5 12 Q15.5 13.5 14 13.5 L2 13.5 Q0.5 13.5 0.5 12 Z" fill="#f4ae3d"/></svg>
<span class="t" style="top:89.00px;font-size:12.3px;line-height:15px;color:#26262b;left:695.32px;transform-origin:0 50%;transform:scaleX(0.9767);">TV</span>
<svg style="left:726px;top:89px" width="16" height="14" viewBox="0 0 16 14"><path d="M0.5 2 Q0.5 0.5 2 0.5 L6 0.5 L7.5 2.2 L14 2.2 Q15.5 2.2 15.5 3.7 L15.5 12 Q15.5 13.5 14 13.5 L2 13.5 Q0.5 13.5 0.5 12 Z" fill="#f4ae3d"/></svg>
<span class="t" style="top:89.00px;font-size:12.3px;line-height:15px;color:#26262b;left:747.32px;transform-origin:0 50%;transform:scaleX(1.0086);">shopping</span>
<svg style="left:814px;top:88px;" width="17" height="17" viewBox="0 0 17 17"><path d="M5 3.5 H7 A2 2 0 1 1 10.6 3.5 H13 Q14 3.5 14 4.5 V7 A2 2 0 1 1 14 10.6 V14.5 Q14 15.500 13 15.500 H10.500 A2 2 0 1 0 7 15.500 H5 Q4 15.500 4 14.5 V11.5 A2 2 0 1 1 4 7.500 V4.5 Q4 3.5 5 3.5 Z" fill="#2d3a9e"/></svg>
<span class="t" style="top:89.00px;font-size:12.3px;line-height:15px;color:#26262b;left:835.32px;transform-origin:0 50%;transform:scaleX(0.9756);">Unchive</span>
<svg style="left:895px;top:88px;" width="16" height="17" viewBox="0 0 16 17"><rect x="0" y="0.5" width="16" height="16" rx="3" fill="#f6a832"/><path d="M3 4.2 Q8 2.5 13 4.2 Q13 10.500 8 13.500 Q3 10.500 3 4.2 Z" fill="none" stroke="#222" stroke-width="1.4"/><path d="M4 5.5 L12 9" stroke="#222" stroke-width="1.3"/></svg>
<span class="t" style="top:89.00px;font-size:12.3px;line-height:15px;color:#26262b;left:916.32px;transform-origin:0 50%;transform:scaleX(1.0336);">Nomorobo</span>
<svg style="left:992px;top:89px" width="16" height="14" viewBox="0 0 16 14"><path d="M0.5 2 Q0.5 0.5 2 0.5 L6 0.5 L7.5 2.2 L14 2.2 Q15.5 2.2 15.5 3.7 L15.5 12 Q15.5 13.5 14 13.5 L2 13.5 Q0.5 13.5 0.5 12 Z" fill="#f4ae3d"/></svg>
<span class="t" style="top:89.00px;font-size:12.3px;line-height:15px;color:#26262b;left:1013.32px;transform-origin:0 50%;transform:scaleX(0.9937);">AI2</span>
<div style="left:0px;top:0px;width:1362px;height:1px;background:#55555a;"></div>
<div style="left:0px;top:0px;width:1px;height:730px;background:#2a2a2c;"></div>
<div style="left:1361px;top:0px;width:1px;height:730px;background:#2a2a2c;"></div>
</body></html>
